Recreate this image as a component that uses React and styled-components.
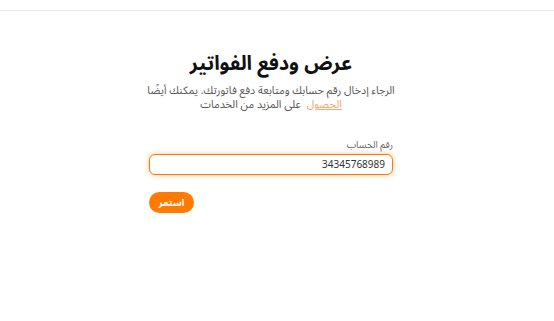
import React from "react";
import styled, { createGlobalStyle } from "styled-components";

const GlobalStyle = createGlobalStyle`
  html, body {
    margin: 0;
    padding: 0;
    background: #ffffff;
    font-family: "Noto Sans Arabic", "Noto Sans", sans-serif;
  }
`;

const Header = styled.header`
  height: 10px;
  border-bottom: 1px solid #ececec;
`;

const Main = styled.main`
  display: flex;
  justify-content: center;
  padding: 39px 12px 0 0;
`;

const Form = styled.div`
  width: 244px;
  direction: rtl;
  display: flex;
  flex-direction: column;
`;

const Title = styled.h1`
  margin: 0;
  text-align: center;
  font-size: 20px;
  font-weight: 700;
  color: #111;
  line-height: 28px;
`;

const Subtitle = styled.p`
  margin: 6px -20px 0;
  text-align: center;
  font-size: 10.8px;
  line-height: 14px;
  color: #555;
  white-space: nowrap;
`;

const Link = styled.a`
  color: #f7a46c;
  text-decoration: underline;
  margin-left: 3px;
`;

const Label = styled.label`
  margin-top: 26px;
  font-size: 9.5px;
  line-height: 14px;
  color: #666;
`;

const Input = styled.input`
  margin-top: 2px;
  height: 21px;
  box-sizing: border-box;
  border: 1.5px solid #ff7a00;
  border-radius: 6px;
  box-shadow: 0 0 4px 1px rgba(255, 140, 40, 0.35);
  padding: 0 7px;
  font-family: "Noto Sans Arabic", "Noto Sans", sans-serif;
  font-size: 10px;
  color: #333;
  outline: none;
  direction: rtl;
`;

const Button = styled.button`
  margin-top: 17px;
  align-self: flex-end;
  width: 45px;
  height: 21px;
  padding: 0;
  border: none;
  border-radius: 11px;
  background: #ff7a00;
  color: #fff;
  font-family: "Noto Sans Arabic", sans-serif;
  font-size: 9.5px;
  font-weight: 700;
`;

export default function App() {
  return (
    <>
      <GlobalStyle />
      <Header />
      <Main>
        <Form>
          <Title>عرض ودفع الفواتير</Title>
          <Subtitle>
            الرجاء إدخال رقم حسابك ومتابعة دفع فاتورتك. يمكنك أيضًا
            <br />
            <Link href="#">الحصول</Link> على المزيد من الخدمات
          </Subtitle>
          <Label>رقم الحساب</Label>
          <Input defaultValue="34345768989" />
          <Button>استمر</Button>
        </Form>
      </Main>
    </>
  );
}
